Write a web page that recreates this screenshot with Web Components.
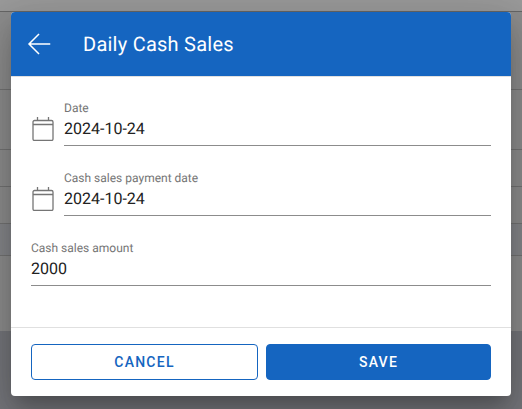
<!DOCTYPE html>
<html>
<head>
<meta charset="utf-8">
<title>Daily Cash Sales</title>
<style>
html, body { margin: 0; height: 100%; overflow: hidden; }
body { font-family: Roboto, "Liberation Sans", sans-serif; text-rendering: geometricPrecision; }
</style>
</head>
<body>
<app-backdrop>
  <cash-dialog heading="Daily Cash Sales">
    <form-field label="Date" value="2024-10-24" dated></form-field>
    <form-field label="Cash sales payment date" value="2024-10-24" dated></form-field>
    <form-field label="Cash sales amount" value="2000"></form-field>
    <dialog-button slot="actions" outlined>Cancel</dialog-button>
    <dialog-button slot="actions">Save</dialog-button>
  </cash-dialog>
</app-backdrop>

<script>
const backdropTemplate = document.createElement('template');
backdropTemplate.innerHTML = `
<style>
:host {
    display: block;
    position: relative;
    width: 522px;
    height: 409px;
    overflow: hidden;
    background: #75767b;
}
.row { border-bottom: 1px solid #737373; box-sizing: border-box; background: #8d8d8d; }
.row.tint { background: #85868a; }
</style>
<div class="row" style="height:12px; background:#9a9a9a; border-bottom-color:#666"></div>
<div class="row" style="height:78px"></div>
<div class="row" style="height:60px"></div>
<div class="row" style="height:37px"></div>
<div class="row" style="height:37px"></div>
<div class="row tint" style="height:32px"></div>
<div class="row" style="height:75px; border-bottom:0"></div>
<slot></slot>
`;

class AppBackdrop extends HTMLElement {
    constructor() {
        super();
        this.attachShadow({ mode: 'open' }).appendChild(backdropTemplate.content.cloneNode(true));
    }
}

const dialogTemplate = document.createElement('template');
dialogTemplate.innerHTML = `
<style>
:host {
    display: flex;
    flex-direction: column;
    position: absolute;
    left: 11px;
    top: 12px;
    width: 500px;
    height: 384px;
    background: #fff;
    border-radius: 4px;
    overflow: hidden;
    box-shadow: 0 11px 15px -7px rgba(0,0,0,.2), 0 24px 38px 3px rgba(0,0,0,.14), 0 9px 46px 8px rgba(0,0,0,.12);
}
header {
    display: flex;
    align-items: center;
    height: 64px;
    padding-left: 16px;
    background: #1565c0;
    color: #fff;
    border-bottom: 1px solid #e0e0e0;
    flex: none;
}
header svg { width: 24px; height: 24px; display: block; }
h1 {
    margin: 0 0 0 32px;
    font-size: 20px;
    font-weight: 400;
    letter-spacing: .25px;
}
main {
    flex: 1;
    padding: 19px 20px 0;
}
footer {
    display: grid;
    grid-template-columns: 227px 225px;
    gap: 8px;
    padding: 16px 20px;
    border-top: 1px solid #e0e0e0;
    flex: none;
}
</style>
<header>
    <svg viewBox="0 0 24 24" fill="none" stroke="#fff" stroke-width="1.5" stroke-linecap="square">
        <path d="M22.5 12H2.5M11.5 2.5 2 12l9.5 9.5"/>
    </svg>
    <h1></h1>
</header>
<main><slot></slot></main>
<footer><slot name="actions"></slot></footer>
`;

class CashDialog extends HTMLElement {
    constructor() {
        super();
        this.attachShadow({ mode: 'open' }).appendChild(dialogTemplate.content.cloneNode(true));
    }

    connectedCallback() {
        this.shadowRoot.querySelector('h1').textContent = this.getAttribute('heading');
    }
}

const fieldTemplate = document.createElement('template');
fieldTemplate.innerHTML = `
<style>
:host {
    display: flex;
    align-items: flex-end;
    height: 50px;
    margin-bottom: 20px;
}
svg {
    display: none;
    width: 24px;
    height: 24px;
    margin: 0 9px 5px 0;
    flex: none;
}
:host([dated]) svg { display: block; }
.box {
    flex: 1;
    height: 50px;
    box-sizing: border-box;
    border-bottom: 1px solid #8c8c8c;
}
label {
    display: block;
    padding-top: 5px;
    font-size: 12px;
    line-height: 14px;
    color: #757575;
}
.value {
    margin-top: 2px;
    font-size: 16px;
    line-height: 24px;
    color: #212121;
}
</style>
<svg viewBox="0 0 24 24" fill="none" stroke="#757575" stroke-width="1.3">
    <rect x="2" y="3.5" width="20" height="20" rx="1.5"/>
    <path d="M2 7.5h20M6.5 0v3.5M17.5 0v3.5"/>
</svg>
<div class="box">
    <label></label>
    <div class="value"></div>
</div>
`;

class FormField extends HTMLElement {
    constructor() {
        super();
        this.attachShadow({ mode: 'open' }).appendChild(fieldTemplate.content.cloneNode(true));
    }

    connectedCallback() {
        this.shadowRoot.querySelector('label').textContent = this.getAttribute('label');
        this.shadowRoot.querySelector('.value').textContent = this.getAttribute('value');
    }
}

const buttonTemplate = document.createElement('template');
buttonTemplate.innerHTML = `
<style>
:host { display: block; }
button {
    display: block;
    width: 100%;
    height: 36px;
    padding: 0;
    box-sizing: border-box;
    border: 1px solid #1565c0;
    border-radius: 4px;
    background: #1565c0;
    color: #fff;
    font: 500 14px Roboto, "Liberation Sans", sans-serif;
    letter-spacing: 1.25px;
    text-transform: uppercase;
}
:host([outlined]) button {
    background: #fff;
    color: #1565c0;
}
</style>
<button type="button"><slot></slot></button>
`;

class DialogButton extends HTMLElement {
    constructor() {
        super();
        this.attachShadow({ mode: 'open' }).appendChild(buttonTemplate.content.cloneNode(true));
    }
}

customElements.define('app-backdrop', AppBackdrop);
customElements.define('cash-dialog', CashDialog);
customElements.define('form-field', FormField);
customElements.define('dialog-button', DialogButton);
</script>
</body>
</html>
